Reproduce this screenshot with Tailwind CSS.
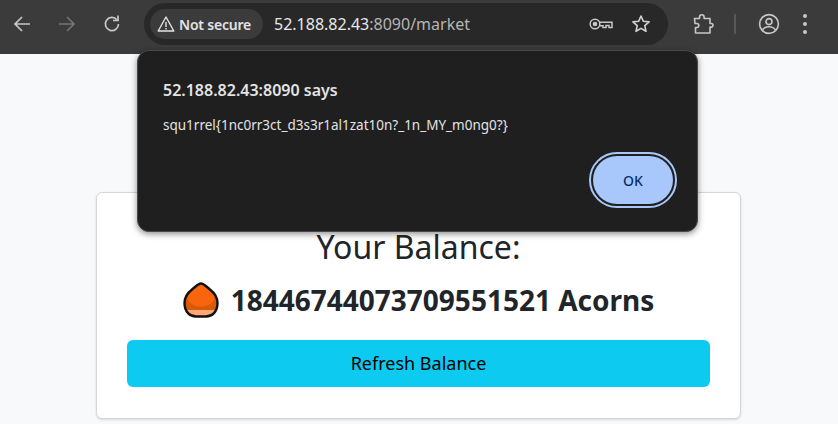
<!DOCTYPE html>
<html lang="en">
<head>
    <meta charset="UTF-8">
    <meta name="viewport" content="width=device-width, initial-scale=1.0">
    <title>Market</title>
    <script src="https://cdn.jsdelivr.net/npm/@tailwindcss/browser@4"></script>
</head>
<body class="relative w-[838px] h-[424px] overflow-hidden bg-[#f8f9fa] font-['Noto_Sans',sans-serif]">
    <!-- browser toolbar -->
    <div class="h-[54px] bg-[#3b3b3b] flex items-start">
        <div class="w-[144px] h-[48px] flex items-center shrink-0">
            <svg class="ml-[11px] w-[22px] h-[22px]" viewBox="0 0 22 22" fill="none" stroke="#c7c7c7" stroke-width="1.7"><path d="M19 11H4M11 4l-7 7 7 7"/></svg>
            <svg class="ml-[23px] w-[22px] h-[22px]" viewBox="0 0 22 22" fill="none" stroke="#757575" stroke-width="1.7"><path d="M3 11h15M11 4l7 7-7 7"/></svg>
            <svg class="ml-[23px] w-[22px] h-[22px]" viewBox="0 0 22 22" fill="none" stroke="#c7c7c7" stroke-width="1.7"><path d="M17.5 11a6.6 6.6 0 1 1-1.6-4.3"/><path d="M17 2.5v5h-5" /></svg>
        </div>
        <div class="mt-[3px] w-[524px] h-[42px] rounded-full bg-[#282828] flex items-center pl-[6px] pr-[17px] shrink-0">
            <div class="w-[113px] h-[30px] rounded-full bg-[#3b3b3b] flex items-center pl-[6px] gap-[3px]">
                <svg class="w-[20px] h-[20px] shrink-0" viewBox="0 0 20 20" fill="none" stroke="#e3e3e3" stroke-width="1.4"><path d="M10 3 2.2 17h15.6z" stroke-linejoin="round"/><path d="M10 8v5M10 14v1.5"/></svg>
                <span class="text-[14px] font-semibold text-[#e3e3e3] whitespace-nowrap tracking-[-0.2px]">Not secure</span>
            </div>
            <div class="ml-[11px] text-[16px] text-[#e8e8e8] whitespace-nowrap">52.188.82.43<span class="text-[#b5b5b5]">:8090/market</span></div>
            <svg class="ml-auto w-[24px] h-[16px]" viewBox="0 0 24 16" fill="none" stroke="#c7c7c7" stroke-width="1.5"><circle cx="6" cy="8" r="4.8"/><circle cx="6" cy="8" r="1.6" fill="#c7c7c7"/><path d="M10.8 6.2H23v5.3h-3V9.5h-3v2h-3V9.8h-3.2"/></svg>
            <svg class="ml-[18px] w-[20px] h-[20px]" viewBox="0 0 20 20" fill="none" stroke="#d0d0d0" stroke-width="1.6"><path d="m10 2 2.4 5.3 5.7.6-4.3 3.8 1.2 5.6-5-2.9-5 2.9 1.2-5.6L1.9 7.9l5.7-.6z" stroke-linejoin="round"/></svg>
        </div>
        <div class="h-[48px] flex items-center">
            <svg class="ml-[24px] w-[22px] h-[22px]" viewBox="0 0 22 22" fill="none" stroke="#c7c7c7" stroke-width="1.6"><path d="M2.5 5.5h5V4a2.3 2.3 0 0 1 4.6 0v1.5H18v5h1.2a1.7 1.7 0 0 1 0 3.6H18V20H3.5v-5.5h1.3a2 2 0 0 0 0-4H3z" stroke-linejoin="round"/></svg>
            <div class="ml-[20px] w-[2px] h-[20px] bg-[#585858]"></div>
            <svg class="ml-[22px] w-[22px] h-[22px]" viewBox="0 0 22 22" fill="none" stroke="#c7c7c7" stroke-width="1.6"><circle cx="11" cy="11" r="9.4"/><circle cx="11" cy="8.6" r="3"/><path d="M4.6 17c1.5-2.4 4-3.2 6.4-3.2s4.900.8 6.400 3.200"/></svg>
            <div class="ml-[23px] flex flex-col gap-[4px]">
                <div class="w-[4px] h-[4px] rounded-full bg-[#c7c7c7]"></div>
                <div class="w-[4px] h-[4px] rounded-full bg-[#c7c7c7]"></div>
                <div class="w-[4px] h-[4px] rounded-full bg-[#c7c7c7]"></div>
            </div>
        </div>
    </div>

    <!-- page -->
    <div class="pt-[138px] pl-[96px]">
        <div class="w-[645px] h-[227px] bg-white border border-[#d4d6d8] rounded-[6px] shadow-sm px-[30px] pt-[30px] text-[#212529]">
            <h2 class="text-center text-[32px] leading-[48px]">Your Balance:</h2>
            <div class="mt-[5px] flex items-center justify-center gap-[12px] h-[48px]">
                <svg class="w-[36px] h-[36px] shrink-0" viewBox="0 0 36 36">
                    <path d="M18 1.500C21 1.500 23 4.500 27 7.500C31.500 11 34.500 15 34.500 21C34.500 30 29 34.500 23 34.500H13C7 34.500 1.500 30 1.500 21C1.500 15 4.500 11 9 7.500C13 4.500 15 1.500 18 1.500Z" fill="#d95a06"/>
                    <path d="M18 2C21 2 23 4.500 27 7.500C30 10 32 13 31.500 17C29 22.500 24 24.500 18 24.500C12 24.500 7 22.500 4.500 17C4 13 6 10 9 7.500C13 4.500 15 2 18 2Z" fill="#f9650c"/>
                    <path d="M3.500 28H32.500C30.500 32.500 27 34 23 34H13C9 34 5.500 32.500 3.500 28Z" fill="#fda67a"/>
                    <path d="M18 1.500C21 1.500 23 4.500 27 7.500C31.500 11 34.500 15 34.500 21C34.500 30 29 34.500 23 34.500H13C7 34.500 1.500 30 1.500 21C1.500 15 4.500 11 9 7.500C13 4.500 15 1.500 18 1.500Z" fill="none" stroke="#111" stroke-width="2.400"/>
                </svg>
                <span class="text-[28px] font-bold whitespace-nowrap">18446744073709551521 Acorns</span>
            </div>
            <button class="mt-[16px] block w-[583px] h-[47px] rounded-[6px] bg-[#0dcaf0] text-[#000] text-[18px]">Refresh Balance</button>
        </div>
    </div>

    <!-- alert dialog -->
    <div class="absolute left-[137px] top-[50px] w-[561px] h-[182px] rounded-[12px] bg-[#1f1f1f] border border-[#4a4a4a] shadow-[0_2px_6px_rgba(0,0,0,0.45)] pl-[25px] pr-[20px] pt-[27px]">
        <div class="text-[16px] leading-[24px] font-semibold text-[#e3e3e3]">52.188.82.43:8090 says</div>
        <div class="mt-[13px] text-[13.500px] leading-[20px] text-[#e3e3e3] whitespace-nowrap">squ1rrel{1nc0rr3ct_d3s3r1al1zat10n?_1n_MY_m0ng0?}</div>
        <div class="mt-[17px] flex justify-end">
            <button class="w-[88px] h-[56px] rounded-full border-2 border-[#a8c7fa] flex items-center justify-center">
                <span class="w-[80px] h-[48px] rounded-full bg-[#a8c7fa] flex items-center justify-center text-[14px] font-medium text-[#062e6f]">OK</span>
            </button>
        </div>
    </div>
</body>
</html>
